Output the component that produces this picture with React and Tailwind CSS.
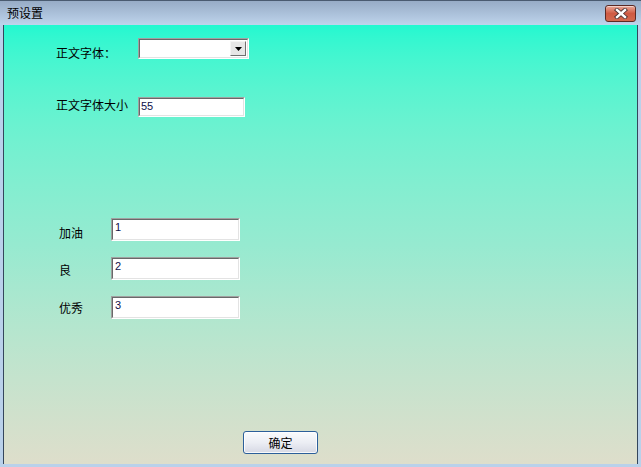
import React from 'react';

const cjk = "font-['Noto_Sans_CJK_SC','Noto_Sans',sans-serif]";

function CloseButton() {
  return (
    <div className="w-[31px] h-[17px] rounded-[3px] border border-[#5b2a24] bg-gradient-to-b from-[#e8a898] via-[#cf5a43] to-[#d26a4f] flex items-center justify-center shadow-[inset_0_1px_0_rgba(255,255,255,0.5)]">
      <svg width="14" height="11" viewBox="0 0 14 11">
        <path d="M3 2 L11 9 M11 2 L3 9" stroke="#4a3030" strokeWidth="4.2" strokeLinecap="square" />
        <path d="M3 2 L11 9 M11 2 L3 9" stroke="#ffffff" strokeWidth="2.4" strokeLinecap="square" />
      </svg>
    </div>
  );
}

function Sunken({ className, children }) {
  return (
    <div className={`border border-t-[#a0a0a0] border-l-[#a0a0a0] border-b-[#ffffff] border-r-[#ffffff] ${className}`}>
      <div className="h-full w-full border border-t-[#696969] border-l-[#696969] border-b-[#e3e3e3] border-r-[#e3e3e3] bg-white">
        {children}
      </div>
    </div>
  );
}

function TextBox({ value, className, pad = 'pl-[2px] pt-[1px]' }) {
  return (
    <Sunken className={className}>
      <div className={`${pad} font-['Liberation_Sans',sans-serif] text-[11px] leading-[13px] text-[#10104a]`}>{value}</div>
    </Sunken>
  );
}

function FormRow({ label, labelWidth, labelTop, children, className }) {
  return (
    <div className={`flex items-start ${className}`}>
      <div className={`${labelWidth} ${labelTop} text-[12px] leading-[13px] text-[#000] ${cjk}`}>{label}</div>
      {children}
    </div>
  );
}

export default function App() {
  return (
    <div className="w-[641px] h-[467px] flex flex-col bg-[#b9d1ea] overflow-hidden">
      <div className="h-[25px] shrink-0 flex items-start justify-between pl-[7px] pr-[5px] bg-gradient-to-b from-[#97acc6] to-[#bed4ec] border-t border-[#4a5b70]">
        <span className={`mt-[5px] text-[12px] leading-[14px] text-black ${cjk}`}>预设置</span>
        <div className="mt-[4px]">
          <CloseButton />
        </div>
      </div>
      <div className="flex-1 flex pl-[3px] pr-[3px] pb-[3px] min-h-0">
        <div className="flex-1 flex flex-col border-l border-r border-[#34465c] bg-gradient-to-b from-[#22f8d0] via-[#96ead0] to-[#dedecb]">
          <FormRow label="正文字体：" labelWidth="w-[82px] pl-[52px] box-content" labelTop="mt-[8px]" className="mt-[13px]">
            <Sunken className="w-[111px] h-[21px]">
              <div className="flex justify-end h-full pr-[1px] pt-[1px]">
                <div className="w-[16px] h-[15px] bg-[#e6e6e6] border border-t-[#f4f4f4] border-l-[#f4f4f4] border-b-[#707070] border-r-[#707070] flex items-center justify-center">
                  <svg width="7" height="4" viewBox="0 0 7 4">
                    <path d="M0 0 H7 L3.5 4 Z" fill="#000" />
                  </svg>
                </div>
              </div>
            </Sunken>
          </FormRow>
          <FormRow label="正文字体大小" labelWidth="w-[82px] pl-[52px] box-content" labelTop="mt-[1px]" className="mt-[38px]">
            <TextBox value="55" className="w-[107px] h-[20px]" pad="pl-[1px] pt-[1px]" />
          </FormRow>
          <FormRow label="加油" labelWidth="w-[52px] pl-[55px] box-content" labelTop="mt-[8px]" className="mt-[101px]">
            <TextBox value="1" className="w-[129px] h-[23px]" />
          </FormRow>
          <FormRow label="良" labelWidth="w-[52px] pl-[55px] box-content" labelTop="mt-[6px]" className="mt-[16px]">
            <TextBox value="2" className="w-[129px] h-[23px]" />
          </FormRow>
          <FormRow label="优秀" labelWidth="w-[52px] pl-[55px] box-content" labelTop="mt-[5px]" className="mt-[16px]">
            <TextBox value="3" className="w-[129px] h-[23px]" />
          </FormRow>
          <div className="mt-auto mb-[10px] pl-[239px]">
            <button className={`w-[75px] h-[23px] rounded-[3px] border border-[#2c5f9a] bg-gradient-to-b from-[#fafbfd] via-[#eceef4] to-[#d6d8e4] shadow-[inset_0_0_0_1px_rgba(255,255,255,0.8)] text-[12px] leading-[14px] text-black ${cjk}`}>
              确定
            </button>
          </div>
        </div>
      </div>
    </div>
  );
}
